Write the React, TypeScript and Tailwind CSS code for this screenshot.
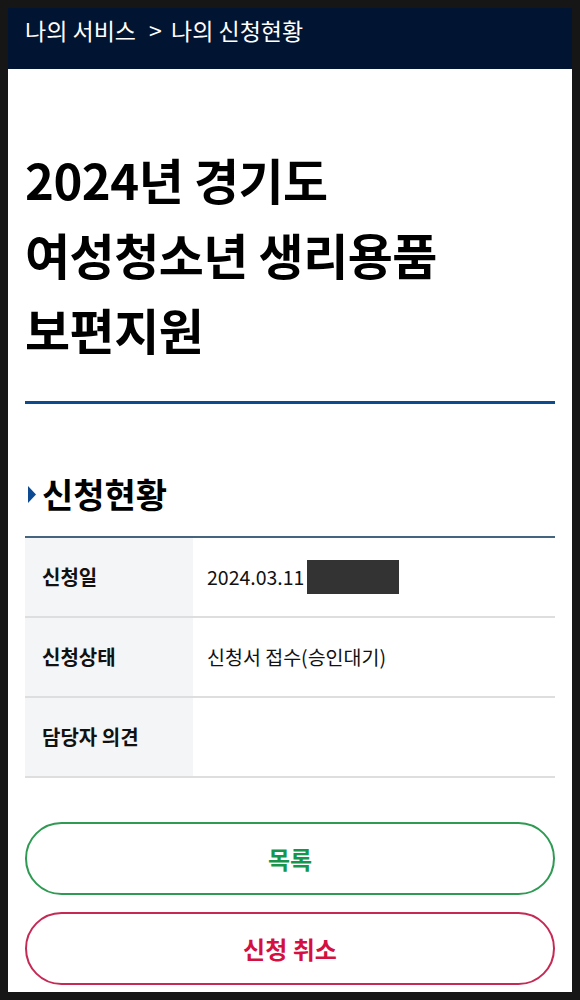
import React from "react";

const rows = [
  { label: "신청일", value: "2024.03.11", masked: true },
  { label: "신청상태", value: "신청서 접수(승인대기)", masked: false },
  { label: "담당자 의견", value: "", masked: false },
];

function App() {
  return (
    <div
      className="h-[1000px] w-[580px] bg-[#161616] p-2"
      style={{ fontFamily: '"Noto Sans CJK KR", "Noto Sans", sans-serif' }}
    >
      <div className="flex h-full flex-col overflow-hidden bg-white">
        {/* breadcrumb */}
        <div className="h-[61px] shrink-0 bg-[#011533] px-[17px] pt-[6px] text-[23px] leading-[32px] text-white">
          나의 서비스 <span className="ml-[8px] mr-[4px]">&gt;</span> 나의 신청현황
        </div>

        <div className="flex flex-col px-[17px]">
          <h1 className="mt-[72px] border-b-[3px] border-[#0d4a8e] pb-[35px] text-[49px] font-bold leading-[75px] tracking-[-0.01em] text-black">
            2024년 경기도
            <br />
            여성청소년 생리용품
            <br />
            보편지원
          </h1>

          <div className="mt-[70px] flex h-[40px] items-center gap-[6px] pl-[3px]">
            <svg width="8" height="17" viewBox="0 0 8 17" className="shrink-0">
              <polygon points="0,0 8,8.5 0,17" fill="#0d4a94" />
            </svg>
            <h2 className="text-[34px] font-bold leading-[40px] text-black">신청현황</h2>
          </div>

          <div className="mt-[22px] border-t-2 border-[#45657f]">
            {rows.map((r) => (
              <div key={r.label} className="flex h-[80px] border-b-2 border-[#dedede]">
                <div className="flex w-[168px] shrink-0 items-center bg-[#f4f5f7] pl-[17px] text-[20px] font-bold text-[#111]">
                  {r.label}
                </div>
                <div className="flex items-center pl-[14px] text-[19.5px] text-[#111]">
                  {r.value}
                  {r.masked && <span className="ml-[3px] inline-block h-[34px] w-[92px] bg-[#333]" />}
                </div>
              </div>
            ))}
          </div>

          <button className="mt-[44px] flex h-[73px] items-center justify-center rounded-full border-2 border-[#2e9a52] text-[24px] font-bold text-[#17954a]">
            목록
          </button>
          <button className="mt-[17px] flex h-[73px] items-center justify-center rounded-full border-2 border-[#c52a55] text-[24px] font-bold text-[#d3103f]">
            신청 취소
          </button>
        </div>
      </div>
    </div>
  );
}

export default App;
